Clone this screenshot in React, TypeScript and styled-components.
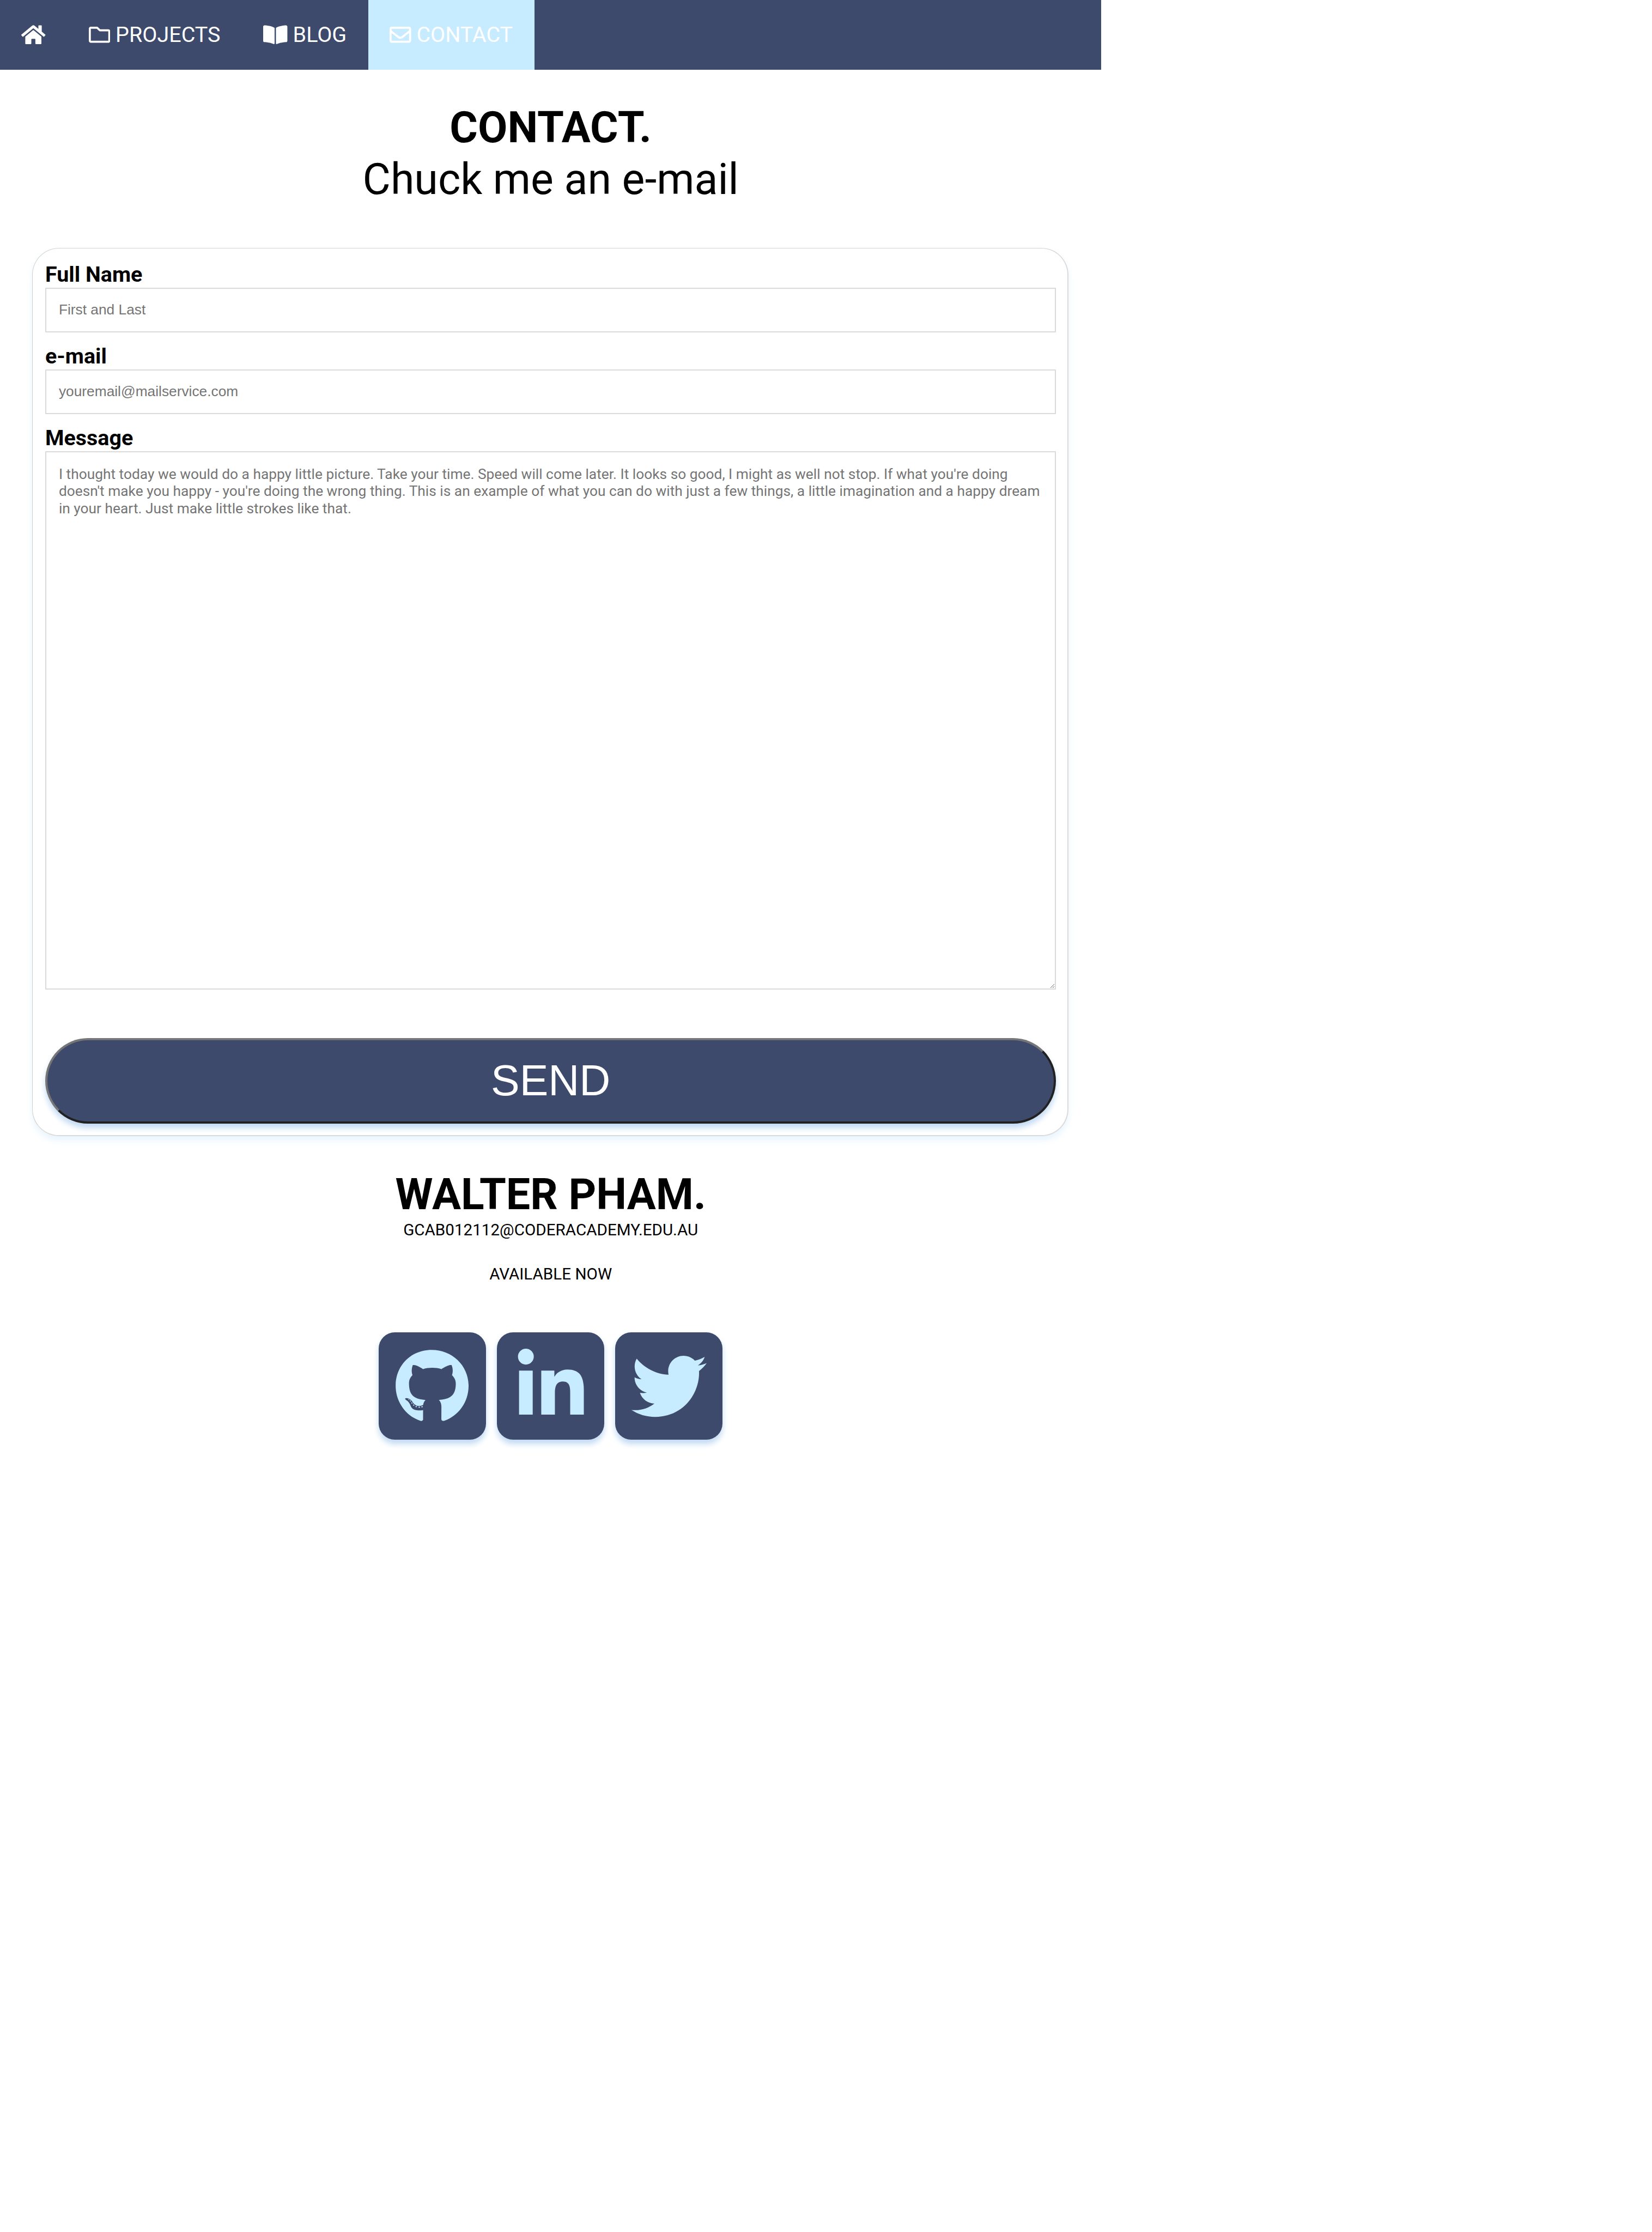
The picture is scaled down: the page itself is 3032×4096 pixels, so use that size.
import React from "react";
import styled, { createGlobalStyle } from "styled-components";
import { FaHome, FaRegFolder, FaBookOpen, FaRegEnvelope, FaGithub, FaLinkedinIn, FaTwitter } from "react-icons/fa";

const SCALE = 3032 / 3072;
const u = (n: number) => `${+(n * SCALE).toFixed(3)}px`;

const navy = "#3d4a6b";
const sky = "#c7ebff";
const arial = `"Liberation Sans", Arial, sans-serif`;

const Global = createGlobalStyle`
  * { box-sizing: border-box; }
  html, body { margin: 0; background: #fff; }
  body { font-family: Roboto, sans-serif; color: #000; }
`;

const Page = styled.div`
  width: ${u(2048)};
  min-height: ${u(4150)};
  display: flex;
  flex-direction: column;
`;

const Nav = styled.nav`
  display: flex;
  height: ${u(129.4)};
  background: ${navy};
`;

const NavLink = styled.a<{ $active?: boolean; $wideIcon?: boolean }>`
  display: flex;
  align-items: center;
  gap: ${u(9.9)};
  padding: 0 ${u(40)};
  font-size: ${u(40)};
  line-height: 1;
  color: #fff;
  white-space: nowrap;
  background: ${(p) => (p.$active ? sky : "transparent")};
  svg {
    flex: none;
    width: ${(p) => u(p.$wideIcon ? 45 : 40)};
    height: ${u(40)};
  }
`;

const Header = styled.header`
  padding-top: ${u(60.5)};
  text-align: center;
  font-size: ${u(80)};
  line-height: ${u(96)};
`;

const Title = styled.h1`
  margin: 0;
  font-size: inherit;
  font-weight: 700;
`;

const Subtitle = styled.p`
  margin: 0;
`;

const Form = styled.form`
  margin: ${u(79.5)} ${u(61)} 0 ${u(60)};
  height: ${u(1651)};
  padding: ${u(22.6)} ${u(21)} 0 ${u(23)};
  display: flex;
  flex-direction: column;
  border: 2px solid #dadada;
  border-width: 1px 2px 2px 1px;
  border-top-color: #d2d2d2;
  border-left-color: #cfcfcf;
  border-radius: ${u(50)};
  box-shadow: 0 ${u(8)} ${u(12)} rgba(199, 230, 255, 0.42);
`;

const Label = styled.label`
  height: ${u(50)};
  font-size: ${u(40)};
  line-height: ${u(50.6)};
  font-weight: 700;
`;

const Input = styled.input`
  flex: none;
  width: 100%;
  height: ${u(83)};
  margin: 0 0 ${u(19)};
  padding: 0 ${u(23.3)};
  border: 2px solid #dbdbdb;
  font: ${u(26.667)} ${arial};
  &::placeholder { color: #757575; opacity: 1; }
`;

const TextArea = styled.textarea`
  flex: none;
  width: 100%;
  height: ${u(1001)};
  margin: 0;
  padding: ${u(25.2)} ${u(23.3)};
  border: 2px solid #dbdbdb;
  font: ${u(26.667)} / ${u(32)} Roboto, sans-serif;
  resize: vertical;
  &::placeholder { color: #757575; opacity: 1; }
`;

const Send = styled.button`
  flex: none;
  width: 100%;
  height: ${u(159)};
  margin: ${u(89.9)} 0 0;
  border: 4px solid;
  border-color: #767676 #212121 #212121 #767676;
  border-radius: ${u(80)};
  background: ${navy};
  color: #fff;
  font: ${u(80)} ${arial};
  box-shadow: 0 ${u(8)} ${u(11)} #c2daf2;
`;

const Footer = styled.footer`
  display: flex;
  flex-direction: column;
  align-items: center;
`;

const Name = styled.h2`
  margin: ${u(61.3)} 0 0;
  font-size: ${u(80)};
  line-height: ${u(96)};
  font-weight: 700;
`;

const Line = styled.p<{ $gap?: number }>`
  margin: ${(p) => u(p.$gap || 0)} 0 0;
  font-size: ${u(30)};
  line-height: ${u(36)};
`;

const Socials = styled.div`
  display: flex;
  gap: ${u(20)};
  margin-top: ${u(89.7)};
`;

const Social = styled.a`
  width: ${u(200)};
  height: ${u(200)};
  display: flex;
  align-items: center;
  justify-content: center;
  border-radius: ${u(30)};
  background: ${navy};
  color: ${sky};
  box-shadow: 0 ${u(8)} ${u(11)} #c2daf2;
  svg { width: ${u(140)}; height: ${u(140)}; }
`;

const message =
  "I thought today we would do a happy little picture. Take your time. Speed will come later. It looks so good, I might as well not stop. If what you're doing doesn't make you happy - you're doing the wrong thing. This is an example of what you can do with just a few things, a little imagination and a happy dream in your heart. Just make little strokes like that.";

export default function App() {
  return (
    <Page>
      <Global />
      <Nav>
        <NavLink $wideIcon><FaHome /></NavLink>
        <NavLink><FaRegFolder />PROJECTS</NavLink>
        <NavLink $wideIcon><FaBookOpen />BLOG</NavLink>
        <NavLink $active><FaRegEnvelope />CONTACT</NavLink>
      </Nav>
      <Header>
        <Title>CONTACT.</Title>
        <Subtitle>Chuck me an e-mail</Subtitle>
      </Header>
      <Form>
        <Label htmlFor="name">Full Name</Label>
        <Input id="name" placeholder="First and Last" />
        <Label htmlFor="email">e-mail</Label>
        <Input id="email" placeholder="youremail@mailservice.com" />
        <Label htmlFor="message">Message</Label>
        <TextArea id="message" placeholder={message} />
        <Send type="button">SEND</Send>
      </Form>
      <Footer>
        <Name>WALTER PHAM.</Name>
        <Line>GCAB012112@CODERACADEMY.EDU.AU</Line>
        <Line $gap={46}>AVAILABLE NOW</Line>
        <Socials>
          <Social><FaGithub /></Social>
          <Social><FaLinkedinIn /></Social>
          <Social><FaTwitter /></Social>
        </Socials>
      </Footer>
    </Page>
  );
}
